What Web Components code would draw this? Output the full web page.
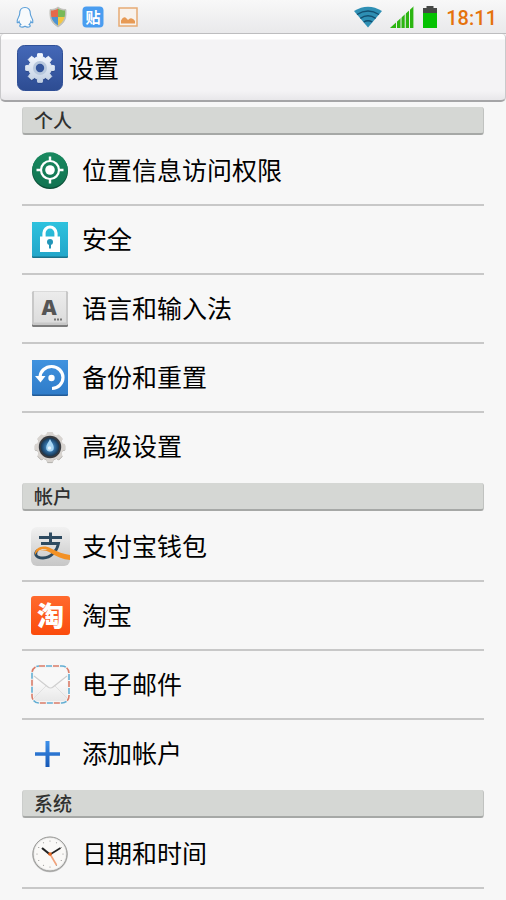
<!DOCTYPE html>
<html lang="zh-CN">
<head>
<meta charset="utf-8">
<meta name="viewport" content="width=device-width, initial-scale=1">
<title>设置</title>
<style>
html{background:#f7f7f7}
body{margin:0;color:#000;font-family:Roboto,"Noto Sans CJK SC",sans-serif}
</style>
</head>
<body>
<settings-page></settings-page>

<template id="page">
<style>
:host{display:block}
main{padding:5px 22px 0}
</style>
<status-bar time="18:11"></status-bar>
<title-bar><ui-icon slot="icon" name="gear"></ui-icon>设置</title-bar>
<main>
<settings-group label="个人">
<settings-row icon="location">位置信息访问权限</settings-row>
<settings-row icon="lock">安全</settings-row>
<settings-row icon="keyboard">语言和输入法</settings-row>
<settings-row icon="backup">备份和重置</settings-row>
<settings-row icon="advanced">高级设置</settings-row>
</settings-group>
<settings-group label="帐户">
<settings-row icon="alipay">支付宝钱包</settings-row>
<settings-row icon="taobao">淘宝</settings-row>
<settings-row icon="mail">电子邮件</settings-row>
<settings-row icon="add">添加帐户</settings-row>
</settings-group>
<settings-group label="系统" open-ended>
<settings-row icon="clock">日期和时间</settings-row>
</settings-group>
</main>
</template>

<template id="status">
<style>
:host{display:flex;box-sizing:border-box;height:34px;padding:0 9px 0 16px;align-items:center;justify-content:space-between;background:linear-gradient(#f8f8f8,#e9e9eb);border-bottom:1px solid #bdbdbf}
div{display:flex;align-items:center}
.left{gap:14px}
.right{gap:8px}
time{font:500 20px/24px Roboto,sans-serif;color:#e5720c;padding-top:2px}
</style>
<div class="left"><ui-icon name="penguin"></ui-icon><ui-icon name="shield"></ui-icon><ui-icon name="tieba"></ui-icon><ui-icon name="picture"></ui-icon></div>
<div class="right"><ui-icon name="wifi"></ui-icon><ui-icon name="signal"></ui-icon><ui-icon name="battery"></ui-icon><time></time></div>
</template>

<template id="title">
<style>
:host{display:block;background:#f5f5f5}
header{display:flex;box-sizing:border-box;height:68px;align-items:center;gap:6px;padding:2px 16px 0;border:1px solid #c9c9cb;border-top:0;border-bottom:2px solid #a5a5a7;border-radius:4px 4px 5px 5px;background:linear-gradient(#fff 0 5px,#f4f3f5 6px 57px,#e8e7ea)}
h1{margin:0;padding-top:4px;font-size:25px;line-height:36px;font-weight:400}
</style>
<header><slot name="icon"></slot><h1><slot></slot></h1></header>
</template>

<template id="group">
<style>
:host{display:block}
h2{box-sizing:border-box;height:28px;margin:0;padding:0 11px;font-size:19px;line-height:30px;font-weight:500;color:#303130;background:#d5d7d4;border-right:1px solid #c0c2c0;border-bottom:2px solid #a6a8a6;border-left:1px solid #cbcdcb;border-radius:3px}
nav{padding:2px 0 1px}
::slotted(settings-row:last-child){--divider:transparent}
:host([open-ended]) ::slotted(settings-row:last-child){--divider:#c8c8c8}
</style>
<section><h2></h2><nav><slot></slot></nav></section>
</template>

<template id="row">
<style>
:host{display:block}
a{display:flex;box-sizing:border-box;height:69px;align-items:center;gap:10px;padding:0 6px;border-bottom:2px solid var(--divider,#c8c8c8);color:#000;text-decoration:none;font-size:25px;line-height:36px}
ui-icon{flex:none}
span{padding-top:2px}
</style>
<a href="#"><ui-icon></ui-icon><span><slot></slot></span></a>
</template>

<script>
const clone = id => document.getElementById(id).content.cloneNode(true);

const gearPath = (n, outer, inner, c) => {
  const pts = [];
  for (let i = 0; i < n; i++) {
    [[-.32, inner], [-.2, outer], [.2, outer], [.32, inner]].forEach(([o, r]) => {
      const a = (i + o) / n * 2 * Math.PI - Math.PI / 2;
      pts.push((c + r * Math.cos(a)).toFixed(2) + ' ' + (c + r * Math.sin(a)).toFixed(2));
    });
  }
  return 'M' + pts.join('L') + 'Z';
};
const clockDots = Array.from({length: 12}, (_, i) => {
  const a = i * Math.PI / 6;
  return `<circle cx="${(22 + 13 * Math.sin(a)).toFixed(2)}" cy="${(22 - 13 * Math.cos(a)).toFixed(2)}" r=".6"/>`;
}).join('');

/* name: [width, height, svg content] */
const ICONS = {
penguin: [18, 22, `<path d="M9 1.500C5.500 1.500 3.700 4 3.700 7.500c0 1.500-.4 2.300-1.200 3.700C1.400 13 .9 14.900 1.200 16.500c.3.7 1.300.2 1.900-1 .3 1.300.9 2.200 1.700 3-1.500.7-1.500 2.200.3 2.500 1.700.3 3-.2 3.900-.8.900.6 2.200 1.100 3.900.8 1.800-.3 1.800-1.800.3-2.500.8-.8 1.400-1.700 1.700-3 .6 1.200 1.600 1.700 1.900 1 .3-1.600-.2-3.500-1.300-5.300-.8-1.400-1.200-2.200-1.200-3.700C14.300 4 12.500 1.500 9 1.500Z" fill="#f7fafc" stroke="#5a9ed8" stroke-width="1.100"/>`],
shield: [20, 22, `<defs><clipPath id="s"><path d="M10 2.500c2 1.500 4.500 2 7 2 .5 7-1 11-7 15C4 15.500 2.500 11.500 3 4.500 5.500 4.500 8 4 10 2.500Z"/></clipPath></defs><path d="M10 1c2.500 2 5 2.500 8 2.500.7 8.500-1 13.500-8 17.500C3 17 1.300 12 2 3.500c3 0 5.500-.5 8-2.500Z" fill="#c3c3ba" stroke="#b4b3ac" stroke-width=".6"/><g clip-path="url(#s)"><path fill="#79b957" d="M10 0h10v11H10z"/><path fill="#e4694b" d="M0 0h10v11H0z"/><path fill="#4c93d0" d="M0 11h10v11H0z"/><path fill="#f3c643" d="M10 11h10v11H10z"/></g>`],
tieba: [22, 22, `<rect x=".5" y=".5" width="21" height="21" rx="4" fill="#4a9df0"/><text x="11" y="16.500" text-anchor="middle" font-family="Noto Sans CJK SC" font-size="15" font-weight="700" fill="#fff">贴</text>`],
picture: [20, 22, `<rect x="1" y="2" width="18" height="18" fill="#f8f2ec" stroke="#e6ab74" stroke-width="1.500"/><path d="M3 17.500v-3q2-4 4.500-3 1.500 1 2.500 2.500 2-2.500 4-1.500 2 .5 3 2.500v2.500z" fill="#e79a55"/>`],
wifi: [28, 22, `<path d="M0 5Q14-3.500 28 5L14 21.500Z" fill="#2e8fb4"/><path d="M3 8.500q11-7 22 0M6.300 12.300q7.700-5 15.400 0M9.700 16q4.300-2.600 8.600 0" fill="none" stroke="#124f70" stroke-width="1.400"/>`],
signal: [24, 22, `<defs><clipPath id="t"><path d="M0 22 24 0v22z"/></clipPath></defs><path clip-path="url(#t)" d="M0 0h6v22H0zM7 0h3.500v22H7zM11.500 0h3.200v22h-3.200zM15.800 0h3.200v22h-3.200zM20 0h3.400v22H20z" fill="#2cb511"/>`],
battery: [16, 22, `<path d="M4.500 0h7v2H15v6H1V2h3.500z" fill="#464846"/><path d="M1 7h14v15H1z" fill="#05c202"/>`],
gear: [46, 46, `<defs><linearGradient id="a" x2="0" y2="1"><stop stop-color="#4468b8"/><stop offset="1" stop-color="#2d4c92"/></linearGradient><linearGradient id="b" x2="0" y2="1"><stop stop-color="#f5f9ff"/><stop offset="1" stop-color="#c1cfe2"/></linearGradient></defs><rect x=".5" y=".5" width="45" height="45" rx="7" fill="url(#a)" stroke="#2f4f96"/><path d="${gearPath(8, 14.5, 11.2, 23)}" transform="translate(0 1.500)" fill="#233e7c" opacity=".6"/><path d="${gearPath(8, 14.5, 11.2, 23)}" fill="url(#b)" stroke="url(#b)" stroke-linejoin="round"/><circle cx="23" cy="23" r="7" fill="#b8c8dd"/><circle cx="23" cy="23" r="4.200" fill="#35569c"/>`],
location: [44, 44, `<defs><linearGradient id="a" x2="0" y2="1"><stop stop-color="#18895f"/><stop offset="1" stop-color="#127351"/></linearGradient></defs><circle cx="22" cy="22" r="18" fill="#0b4e36"/><circle cx="22" cy="21" r="17.700" fill="url(#a)"/><g fill="none" stroke="#fff"><circle cx="22" cy="21" r="9" stroke-width="2.200"/><path d="M22 7.500v5M22 29.500v5M8.500 21h5M30.500 21h5" stroke-width="2.400"/></g><circle cx="22" cy="21" r="4.800" fill="#fff"/>`],
lock: [44, 44, `<defs><linearGradient id="a" x2="0" y2="1"><stop stop-color="#2ec2de"/><stop offset="1" stop-color="#22a6c9"/></linearGradient></defs><rect x="4" y="4" width="36" height="36" rx="1" fill="#19738c"/><rect x="4" y="4" width="36" height="34.500" rx="1" fill="url(#a)"/><path d="M16 20v-5a6 6 0 0 1 12 0v5" fill="none" stroke="#fff" stroke-width="3.200"/><path d="M12 18.500h20V34H12z" fill="#fff"/><circle cx="22" cy="24" r="3" fill="#2295b8"/><path d="M21 25h2v5.500h-2z" fill="#2295b8"/>`],
keyboard: [44, 44, `<defs><linearGradient id="a" x2="0" y2="1"><stop stop-color="#ececec"/><stop offset="1" stop-color="#dcdcdc"/></linearGradient></defs><rect x="4" y="5" width="36" height="35" rx="1.500" fill="#7d7d7d"/><rect x="4" y="4" width="36" height="34" rx="1.500" fill="#c8c8c8"/><path d="M6 4.500h32v31H6z" fill="url(#a)"/><text x="21" y="28" text-anchor="middle" font-family="Open Sans" font-weight="800" font-size="21" fill="#555">A</text><path d="M26 31.500h2v2h-2zM29 31.500h2v2h-2zM32 31.500h2v2h-2z" fill="#777"/>`],
backup: [44, 44, `<defs><linearGradient id="a" x2="0" y2="1"><stop stop-color="#4193df"/><stop offset="1" stop-color="#2f7cc9"/></linearGradient></defs><rect x="4" y="4" width="36" height="36" rx="1" fill="#235b96"/><rect x="4" y="4" width="36" height="34.500" rx="1" fill="url(#a)"/><path d="M12 21A11.500 11 0 1 1 24 32.500" fill="none" stroke="#fff" stroke-width="3.200"/><path d="M7 20h10.500l-5 6.500z" fill="#fff"/><circle cx="23.500" cy="22" r="3.200" fill="#fff"/>`],
advanced: [44, 44, `<defs><radialGradient id="a"><stop stop-color="#6fb3e4"/><stop offset=".6" stop-color="#2c6597"/><stop offset="1" stop-color="#18354f"/></radialGradient></defs><path d="${gearPath(8, 15, 12.5, 22)}" transform="translate(0 .8)" fill="#b4b2ae" stroke="#b4b2ae"/><path d="${gearPath(8, 14.5, 12.5, 22)}" fill="#d8d4d0" stroke="#d8d4d0" stroke-width="1.500" stroke-linejoin="round"/><circle cx="22" cy="22" r="11.200" fill="#383b40"/><circle cx="22" cy="22" r="9.300" fill="url(#a)"/><path d="M22 14c2 4 3.800 6 3.800 8.800a3.800 3.800 0 0 1-7.600 0C18.200 20 20 18 22 14Z" fill="#a9d7f4"/><circle cx="21.500" cy="23" r="1.700" fill="#e6f5ff"/>`],
alipay: [44, 44, `<defs><linearGradient id="a" x2="0" y2="1"><stop stop-color="#f1f1f1"/><stop offset="1" stop-color="#c7c7c7"/></linearGradient></defs><rect x="3" y="2" width="39" height="39" rx="6" fill="url(#a)"/><g fill="none" stroke="#2d4a60"><path d="M11 12.500h23M22.500 7.500v10.500" stroke-width="3"/><path d="M13 18.500h17.500C29 26 23 33 15 33c-8 0-9-5-5-8" stroke-width="2.800"/></g><path d="M7 30c-1-8 9-10.500 16-6.500 7 3.500 12 5.500 19 6.500v5c-7-.5-14-3.500-20-7.500-6-3.500-13-3.500-15 2.500Z" fill="#f39125"/><path d="M9.500 28c1.500-4 6-4.500 10-3.500-4-.2-8 .5-10 3.500Z" fill="#e6e6e6"/>`],
taobao: [44, 44, `<defs><linearGradient id="a" x2="0" y2="1"><stop stop-color="#ff6a2e"/><stop offset="1" stop-color="#fb4b0c"/></linearGradient></defs><rect x="3" y="2" width="39" height="39" rx="3" fill="url(#a)"/><text x="22.500" y="31.500" text-anchor="middle" font-family="Noto Sans CJK SC" font-weight="900" font-size="27" fill="#fff">淘</text>`],
mail: [44, 44, `<defs><linearGradient id="a" x2="0" y2="1"><stop stop-color="#fff"/><stop offset="1" stop-color="#e8e8e8"/></linearGradient></defs><rect x="4" y="3" width="37" height="37" rx="7" fill="#f4f4f4" stroke="#d97c68" stroke-width="1.600" stroke-dasharray="6 8"/><rect x="4" y="3" width="37" height="37" rx="7" fill="none" stroke="#63aed3" stroke-width="1.600" stroke-dasharray="6 8" stroke-dashoffset="-7"/><path d="M6 13v21q0 4 4 4h25q4 0 4-4V13L22.500 26Z" fill="url(#a)"/><path d="M6 35 18 23M39 35 27 23" stroke="#e0e0e0"/><path d="M6 9q0-4 4-4h25q4 0 4 4v4L25 24q-2.500 2-5 0L6 13Z" fill="#f8f8f8"/><path d="M6 13 20 24q2.500 2 5 0l14-11" fill="none" stroke="#cfcfcf" stroke-width="1.200"/>`],
add: [44, 44, `<defs><linearGradient id="a" x2="0" y2="1"><stop stop-color="#3f91ea"/><stop offset="1" stop-color="#1557b5"/></linearGradient></defs><path d="M17.500 9h4v11.200H32v3.600H21.500V35h-4V23.800H7v-3.600h10.500z" fill="url(#a)"/>`],
clock: [44, 44, `<circle cx="22" cy="22.500" r="17.800" fill="#bbb"/><circle cx="22" cy="22" r="17" fill="#ececec" stroke="#999996"/><circle cx="22" cy="22" r="15.500" fill="#faf9f7"/><g fill="#8f8f8d">${clockDots}</g><path d="m22 22 6.500 11" stroke="#f1a27a" stroke-width="1.600"/><path d="M22 22.500 14 16" stroke="#222" stroke-width="2.200"/><path d="m22 22.500 10.500-6.500" stroke="#222" stroke-width="1.600"/><circle cx="22" cy="22" r="1.800" fill="#e9651e"/>`]
};

customElements.define('ui-icon', class extends HTMLElement {
  static observedAttributes = ['name'];
  constructor() { super(); this.attachShadow({mode: 'open'}); }
  attributeChangedCallback() {
    const [w, h, body] = ICONS[this.getAttribute('name')];
    this.shadowRoot.innerHTML = `<style>:host{display:block}svg{display:block}</style><svg width="${w}" height="${h}" viewBox="0 0 ${w} ${h}" aria-hidden="true">${body}</svg>`;
  }
});
customElements.define('status-bar', class extends HTMLElement {
  connectedCallback() {
    const root = this.attachShadow({mode: 'open'});
    root.append(clone('status'));
    root.querySelector('time').textContent = this.getAttribute('time');
  }
});
customElements.define('title-bar', class extends HTMLElement {
  connectedCallback() { this.attachShadow({mode: 'open'}).append(clone('title')); }
});
customElements.define('settings-row', class extends HTMLElement {
  connectedCallback() {
    const root = this.attachShadow({mode: 'open'});
    root.append(clone('row'));
    root.querySelector('ui-icon').setAttribute('name', this.getAttribute('icon'));
  }
});
customElements.define('settings-group', class extends HTMLElement {
  connectedCallback() {
    const root = this.attachShadow({mode: 'open'});
    root.append(clone('group'));
    root.querySelector('h2').textContent = this.getAttribute('label');
  }
});
customElements.define('settings-page', class extends HTMLElement {
  connectedCallback() { this.attachShadow({mode: 'open'}).append(clone('page')); }
});
</script>
</body>
</html>
